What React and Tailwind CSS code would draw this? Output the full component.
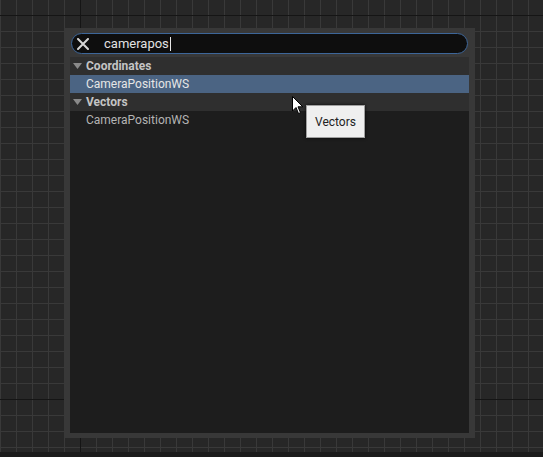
export default function App() {
  const Header = ({ label }) => (
    <div className="h-[18px] flex items-center bg-[#2f2f2f]">
      <svg width="10" height="8" viewBox="0 0 10 8" className="ml-[3px] mr-[3px]">
        <path d="M0 1 L9 1 L4.5 7 Z" fill="#8a8a8a" />
      </svg>
      <span className="text-[12px] font-bold text-[#c4c4c4] leading-none">{label}</span>
    </div>
  );
  const Row = ({ label, selected }) => (
    <div className={`h-[18px] flex items-center pl-[16px] ${selected ? "bg-[#4b6483]" : ""}`}>
      <span className={`text-[12px] leading-none ${selected ? "text-[#e6e6e6]" : "text-[#b4b4b4]"}`}>{label}</span>
    </div>
  );
  return (
    <div
      className="relative w-[543px] h-[457px] overflow-hidden bg-[#272727] pt-[28px] pl-[64px] font-['Roboto',sans-serif] bg-[image:linear-gradient(to_bottom,transparent_452px,#1b1b1b_452px),linear-gradient(to_bottom,transparent_15px,#151515_15px,#151515_16px,transparent_16px),linear-gradient(to_bottom,transparent_399px,#151515_399px,#151515_400px,transparent_400px),linear-gradient(to_right,transparent_80px,#151515_80px,#151515_81px,transparent_81px),linear-gradient(to_right,#393939_1px,transparent_1px),linear-gradient(to_bottom,#393939_1px,transparent_1px)] bg-[size:100%_100%,100%_100%,100%_100%,100%_100%,16px_16px,16px_16px] bg-[position:0_0,0_0,0_0,0_0,0_0,0_15px]"
    >
      <div className="w-[411px] h-[410px] bg-[#383838] flex flex-col px-[6px] pt-[5px] pb-[5px]">
        <div className="h-[21px] mx-[1px] rounded-full border border-[#3d6699] bg-[#0e0e0e] flex items-center">
          <svg width="12" height="12" viewBox="0 0 12 12" className="ml-[5px]">
            <path d="M1 1 L11 11 M11 1 L1 11" stroke="#d6d6d6" strokeWidth="2" strokeLinecap="round" />
          </svg>
          <span className="ml-[15px] text-[13px] text-[#e2e2e2] leading-none">camerapos</span>
          <span className="ml-[1px] w-px h-[14px] bg-[#e6e6e6]" />
        </div>
        <div className="mt-[3px] flex-1 bg-[#1d1d1d] flex flex-col">
          <Header label="Coordinates" />
          <Row label="CameraPositionWS" selected />
          <Header label="Vectors" />
          <Row label="CameraPositionWS" />
        </div>
      </div>

      <div className="absolute left-[306px] top-[105px] w-[59px] h-[33px] bg-[#efefef] border border-[#a0a0a0] shadow-[0_0_3px_rgba(0,0,0,0.8)] flex items-center justify-center">
        <span className="text-[12px] text-[#222] leading-none">Vectors</span>
      </div>

      <svg className="absolute left-[292px] top-[96px]" width="12" height="19" viewBox="0 0 12 19">
        <path d="M0.5 0.5 L0.5 15 L4 11.5 L6.5 17.5 L8.5 16.7 L6 10.8 L10.8 10.8 Z" fill="#ffffff" stroke="#000" strokeWidth="1" />
      </svg>
    </div>
  );
}
